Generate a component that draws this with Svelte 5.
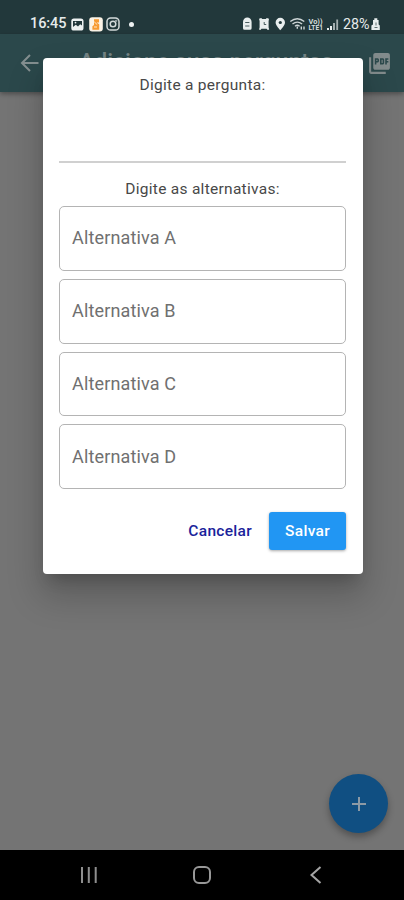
<script lang="ts">
  let pergunta = '';
  let aberto = true;

  let alternativas = [
    { letra: 'A', texto: '' },
    { letra: 'B', texto: '' },
    { letra: 'C', texto: '' },
    { letra: 'D', texto: '' },
  ];

  const fechar = () => {
    aberto = false;
  };

  const abrir = () => {
    aberto = true;
  };
</script>

<div class="screen">
  <header class="status">
    <div class="status-left">
      <span class="clock">16:45</span>
      <svg class="gallery" width="13" height="13" viewBox="0 0 13 13">
        <rect x="0.3" y="0.5" width="12.2" height="12" rx="2.6" fill="#eef2f2" />
        <path d="M2 3h9v4.6L9.2 6.3 7 8.6 4.8 6.8 2 9z" fill="#22383b" />
        <circle cx="4.5" cy="4.6" r="0.9" fill="#eef2f2" />
      </svg>
      <svg class="app" width="14" height="15" viewBox="0 0 14 15">
        <rect x="0.2" y="0.3" width="13.6" height="14.2" rx="3" fill="#fbf3e6" />
        <path d="M5 2.2h5v3.2H7.6l2.600 1.800v5.500H3.400V9.200L5 8z" fill="#f79a31" />
        <path d="M5.200 4.800 8.200 7.600M5 10h3" stroke="#fff0d8" stroke-width="0.9" />
      </svg>
      <svg class="insta" width="14" height="14" viewBox="0 0 14 14" fill="none" stroke="#d3dada" stroke-width="1.5">
        <rect x="1" y="1" width="12" height="12" rx="3.6" />
        <circle cx="7" cy="7" r="2.8" />
        <circle cx="10.3" cy="3.7" r="0.3" />
      </svg>
      <i class="dot"></i>
    </div>
    <div class="status-right">
      <svg width="138" height="16" viewBox="0 0 138 16">
        <g fill="#e9eeee">
          <path d="M1 6a4.300 4.600 0 0 1 8.600 0v6.200q0 1.600-1.600 1.600H2.600Q1 13.800 1 12.200z" />
          <path d="M17 2.800l2.200-.8 1 1h3.600l1-1 2.200.8-.4 2.400v6.200l.6 2-1.400.6-1.300-1.200h-5L18.400 14l-1.400-.6.600-2V5z" />
          <path d="M38.300 1.800a4.700 4.700 0 0 1 4.700 4.700c0 3.200-4.700 7.700-4.700 7.700s-4.700-4.500-4.700-7.700a4.700 4.700 0 0 1 4.700-4.700z" />
          <path d="M85 14v-2h2v2zM88 14v-4h2v4z" />
          <path d="M91 14V7h2v7zM94.300 14V3.500h1.800V14z" opacity="0.65" />
          <path d="M131 4h1.300V2.300h3V4h1.300v4.500l1.200 1V14h-8.400V9.500l1.600-1z" />
        </g>
        <g fill="none" stroke="#22383b" stroke-width="1">
          <path d="M3.200 6.500h4.200M3.200 10h4.200" stroke-width="0.8" />
          <path d="M22.200 6v2.500h2" stroke-width="0.8" />
          <path d="M134 6.500v3M132.500 11.500h3" stroke-width="0.7" />
        </g>
        <circle cx="38.300" cy="6.500" r="1.600" fill="#22383b" />
        <g fill="none" stroke="#ced6d7" stroke-width="1.400">
          <path d="M48.300 5.500q7-5.500 14 0M50.500 8q4.800-3.700 9.600 0M53 10.200q2.300-1.800 4.600 0" />
          <path d="M55.300 10.500v2.200M59.300 10.500v3M62 10.500v3" />
        </g>
        <g fill="#d5dcdd" class="volte">
          <text x="66.500" y="7.600" textLength="14" lengthAdjust="spacingAndGlyphs">Vo))</text>
          <text x="66.500" y="14" textLength="14.500" lengthAdjust="spacingAndGlyphs">LTE1</text>
        </g>
        <text class="percent" x="101" y="12.500" textLength="26.500" lengthAdjust="spacingAndGlyphs">28%</text>
      </svg>
    </div>
  </header>

  <div class="appbar">
    <svg class="back" width="20" height="20" viewBox="0 0 20 20" fill="none" stroke="#848f90" stroke-width="2">
      <path d="M18.500 10H2.600M10 2 2 10l8 8" />
    </svg>
    <h1>Adicione suas perguntas</h1>
    <svg class="pdf" width="25" height="25" viewBox="0 0 24 24" fill="#828b8c">
      <path d="M20 2H8c-1.100 0-2 .9-2 2v12c0 1.100.9 2 2 2h12c1.100 0 2-.9 2-2V4c0-1.100-.9-2-2-2zm-8.500 7.500c0 .83-.67 1.500-1.500 1.500H9v2H7.500V7H10c.83 0 1.500.67 1.500 1.500v1zm5 2c0 .83-.67 1.500-1.500 1.500h-2.500V7H15c.83 0 1.500.67 1.500 1.500v3zm4-3H19v1h1.500V11H19v2h-1.500V7h3v1.500zM9 9.500h1v-1H9v1zM4 6H2v14c0 1.100.9 2 2 2h14v-2H4V6zm10 5.500h1v-3h-1v3z" />
    </svg>
  </div>

  <main>
    <button class="fab" aria-label="Adicionar" on:click={abrir}>
      <svg width="16" height="16" viewBox="0 0 16 16" stroke="#8d9aa5" stroke-width="2">
        <path d="M8 1v14M1 8h14" />
      </svg>
    </button>
  </main>

  <nav>
    <svg width="18" height="18" viewBox="0 0 18 18" stroke="#8e8e8e" stroke-width="2">
      <path d="M2 1v16M8.800 1v16M15.700 1v16" />
    </svg>
    <svg width="20" height="20" viewBox="0 0 20 20" fill="none" stroke="#989898" stroke-width="2">
      <rect x="2" y="2" width="16" height="16" rx="5" />
    </svg>
    <svg width="18" height="20" viewBox="0 0 18 20" fill="none" stroke="#a4a4a4" stroke-width="2">
      <path d="M14.500 2 5.500 10l9 8" />
    </svg>
  </nav>

  {#if aberto}
    <form class="dialog" on:submit|preventDefault={fechar}>
      <label class="heading" for="pergunta">Digite a pergunta:</label>
      <input id="pergunta" class="question" type="text" bind:value={pergunta} />

      <p class="heading">Digite as alternativas:</p>
      <div class="options">
        {#each alternativas as alternativa}
          <input
            class="option"
            type="text"
            placeholder="Alternativa {alternativa.letra}"
            bind:value={alternativa.texto}
          />
        {/each}
      </div>

      <div class="actions">
        <button type="button" class="cancel" on:click={fechar}>Cancelar</button>
        <button type="submit" class="save">Salvar</button>
      </div>
    </form>
  {/if}
</div>

<style>
  * {
    margin: 0;
    padding: 0;
    box-sizing: border-box;
  }

  :global(body) {
    background-color: #000;
  }

  .screen {
    position: relative;
    display: flex;
    flex-direction: column;
    width: 404px;
    height: 900px;
    overflow: hidden;
    font-family: Roboto, 'Liberation Sans', sans-serif;
  }

  svg {
    display: block;
    flex-shrink: 0;
  }

  /* Status bar */
  .status {
    display: flex;
    justify-content: space-between;
    height: 34px;
    padding: 14px 24px 0 30px;
    background-color: #22383b;
  }

  .status-left {
    display: flex;
    align-items: center;
    height: 20px;
  }

  .clock {
    width: 41px;
    color: #e6ebeb;
    font-size: 14.5px;
    line-height: 20px;
    font-weight: 500;
    letter-spacing: -0.1px;
  }

  .app {
    margin-left: 5px;
  }

  .insta {
    margin-left: 3px;
  }

  .dot {
    width: 5px;
    height: 5px;
    margin-left: 9px;
    border-radius: 50%;
    background-color: #eef2f2;
  }

  .status-right {
    padding-top: 2px;
  }

  .volte {
    font-size: 7px;
    font-weight: 700;
  }

  .percent {
    fill: #e6ebeb;
    font-size: 14.5px;
    font-weight: 400;
  }

  /* App bar */
  .appbar {
    position: relative;
    z-index: 1;
    display: flex;
    align-items: center;
    height: 58px;
    padding: 0 12px 0 20px;
    background-color: #2b484b;
    box-shadow: 0 2px 5px rgba(0, 0, 0, 0.35);
  }

  h1 {
    flex: 1;
    margin-left: 39px;
    padding-bottom: 1px;
    color: #758485;
    font-size: 23px;
    font-weight: 500;
    white-space: nowrap;
  }

  main {
    flex: 1;
    display: flex;
    justify-content: flex-end;
    align-items: flex-end;
    padding: 0 16px 17px;
    background-color: #747474;
  }

  .fab {
    display: flex;
    align-items: center;
    justify-content: center;
    width: 59px;
    height: 59px;
    border: none;
    border-radius: 50%;
    background-color: #104f82;
    box-shadow: 0 4px 7px rgba(0, 0, 0, 0.3);
  }

  /* System navigation */
  nav {
    display: flex;
    justify-content: space-between;
    align-items: center;
    height: 50px;
    padding: 0 80px;
    background-color: #000;
  }

  /* Dialog */
  .dialog {
    position: absolute;
    z-index: 2;
    top: 58px;
    left: 43px;
    display: flex;
    flex-direction: column;
    width: 320px;
    height: 516px;
    padding: 17px 17px 24px 16px;
    border-radius: 4px;
    background-color: #fff;
    box-shadow: 0 11px 15px -7px rgba(0, 0, 0, 0.2), 0 20px 34px 3px rgba(0, 0, 0, 0.2);
  }

  .heading {
    color: #484848;
    font-size: 15.5px;
    line-height: 20px;
    letter-spacing: 0.28px;
    text-align: center;
  }

  .question {
    height: 68px;
    margin-bottom: 16px;
    border: none;
    border-bottom: 2px solid #d0d0d0;
    outline: none;
    font: inherit;
    font-size: 18px;
  }

  .options {
    display: flex;
    flex-direction: column;
    gap: 8px;
    margin-top: 7px;
  }

  .option {
    height: 64.8px;
    padding: 0 12px 1px;
    border: 1px solid #b4b4b4;
    border-radius: 5px;
    outline: none;
    font: inherit;
    font-size: 18px;
    letter-spacing: 0.15px;
  }

  .option::placeholder {
    color: #707070;
    opacity: 1;
  }

  .actions {
    display: flex;
    justify-content: flex-end;
    margin-top: auto;
  }

  .actions button {
    height: 38px;
    border: none;
    border-radius: 3px;
    font-family: inherit;
    font-size: 15.5px;
    font-weight: 500;
    letter-spacing: 0.3px;
    cursor: pointer;
  }

  .cancel {
    padding: 0 17px;
    background: none;
    color: #1a239b;
  }

  .save {
    width: 77px;
    background-color: #2196f3;
    box-shadow: 0 1px 3px rgba(0, 0, 0, 0.35);
    color: #fff;
  }
</style>
